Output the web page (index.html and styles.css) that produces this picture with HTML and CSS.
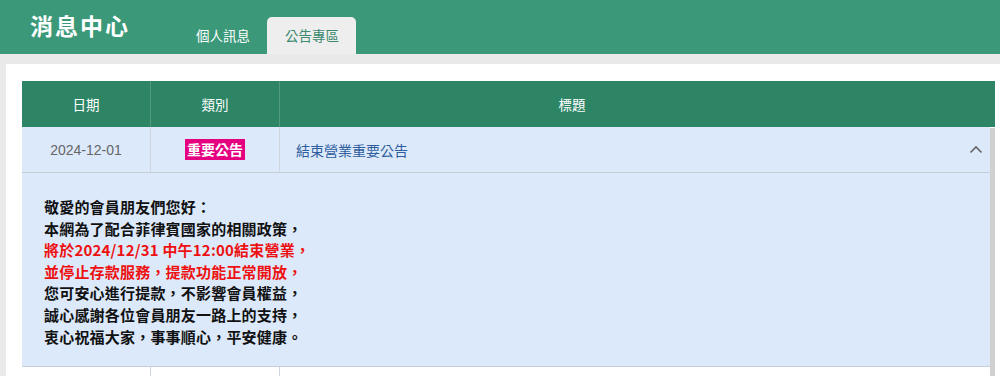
FILE: index.html
```html
<!DOCTYPE html>
<html lang="zh-Hant">
<head>
    <meta charset="UTF-8">
    <meta name="viewport" content="width=device-width, initial-scale=1.0">
    <title>消息中心</title>
    <link rel="stylesheet" href="styles.css">
</head>
<body>

    <header class="topbar">
        <h1 class="brand">消息中心</h1>
        <nav class="tabs">
            <a class="tab">個人訊息</a>
            <a class="tab active">公告專區</a>
        </nav>
    </header>

    <main class="page">
        <div class="panel">
            <table class="grid-head">
                <tr>
                    <th class="col-date">日期</th>
                    <th class="col-type">類別</th>
                    <th class="col-title">標題</th>
                    <th class="col-extra"></th>
                </tr>
            </table>

            <div class="grid-body">
                <table class="notice-list">
                    <tr class="notice open">
                        <td class="col-date date">2024-12-01</td>
                        <td class="col-type"><span class="badge">重要公告</span></td>
                        <td class="title-cell">
                            <a class="title">結束營業重要公告</a>
                            <svg class="chevron" width="14" height="9" viewBox="0 0 14 9">
                                <path d="M1.5 7.5 L7 2 L12.5 7.5" fill="none" stroke="#666" stroke-width="1.6"/>
                            </svg>
                        </td>
                    </tr>
                    <tr class="detail">
                        <td colspan="3">
                            <p>
                                敬愛的會員朋友們您好：<br>
                                本網為了配合菲律賓國家的相關政策，<br>
                                <span class="alert">將於2024/12/31 中午12:00結束營業，<br>
                                並停止存款服務，提款功能正常開放，</span><br>
                                您可安心進行提款，不影響會員權益，<br>
                                誠心感謝各位會員朋友一路上的支持，<br>
                                衷心祝福大家，事事順心，平安健康。
                            </p>
                        </td>
                    </tr>
                    <tr class="notice">
                        <td class="col-date"></td>
                        <td class="col-type"></td>
                        <td></td>
                    </tr>
                </table>
                <div class="scroll-track"></div>
            </div>
        </div>
    </main>

</body>
</html>
```

FILE: styles.css
```css
body {
    margin: 0;
    font-family: "Liberation Sans", "Noto Sans CJK TC", sans-serif;
    background-color: #e9e9e9;
    overflow: hidden;
}
.topbar {
    height: 54px;
    background-color: #3b997a;
    display: flex;
    align-items: flex-end;
}
.brand {
    margin: 0 0 0 30px;
    align-self: flex-start;
    padding-top: 8px;
    font-family: "Noto Sans CJK TC", serif;
    font-size: 23px;
    font-weight: bold;
    letter-spacing: 2px;
    color: #fff;
    width: 136px;
}
.tabs {
    display: flex;
    margin-left: 12px;
}
.tab {
    display: block;
    height: 37px;
    line-height: 37px;
    padding: 0 17px 0 18px;
    font-size: 13.5px;
    color: #fff;
    font-family: "Noto Sans CJK TC", sans-serif;
}
.tab.active {
    background-color: #eeeeee;
    color: #3b8a6f;
    border-radius: 5px 5px 0 0;
}
.page {
    padding: 10px 0 0 6px;
}
.panel {
    background-color: #fff;
    padding: 17px 0 0 16px;
    height: 320px;
}
table {
    border-collapse: collapse;
    table-layout: fixed;
}
.grid-head {
    width: 973px;
    background-color: #2d8566;
    color: #fff;
}
.grid-head th {
    height: 46px;
    padding: 0;
    font-size: 13.5px;
    font-weight: normal;
    font-family: "Noto Sans CJK TC", sans-serif;
    border-left: 1px solid #4f9a80;
}
.grid-head th:first-child {
    border-left: none;
}
.grid-head .col-extra {
    border-left: none;
}
.col-date, .col-type {
    width: 128px;
}
.col-title {
    width: 584px;
}
.grid-body {
    display: flex;
}
.notice-list {
    width: 968px;
    background-color: #dce9fb;
}
.notice-list td {
    border-left: 1px solid #cfd6de;
    border-bottom: 1px solid #c8ced6;
    padding: 0;
    font-size: 14px;
}
.notice-list td:first-child {
    border-left: none;
}
.notice td {
    height: 45px;
    text-align: center;
}
.notice .date {
    color: #666;
}
.badge {
    display: inline-block;
    background-color: #e4007f;
    color: #fff;
    font-weight: bold;
    font-family: "Noto Sans CJK TC", sans-serif;
    padding: 0 2px;
    line-height: 21px;
}
.title-cell {
    text-align: left !important;
    padding: 0 7px 0 16px !important;
}
.title {
    color: #2f5e9e;
    font-family: "Noto Sans CJK TC", sans-serif;
}
.chevron {
    float: right;
    margin-top: 5px;
}
.detail td {
    padding: 23px 22px 19px;
    text-align: left;
}
.detail p {
    margin: 0;
    font-family: "Noto Sans CJK TC", sans-serif;
    font-size: 15px;
    font-weight: bold;
    letter-spacing: 0.2px;
    line-height: 21.6px;
    color: #111;
}
.alert {
    color: #ee1111;
}
.notice-list tr:last-child {
    background-color: #fff;
}
.scroll-track {
    width: 5px;
    margin-top: 1px;
    background-color: #d0d0d0;
}
```
